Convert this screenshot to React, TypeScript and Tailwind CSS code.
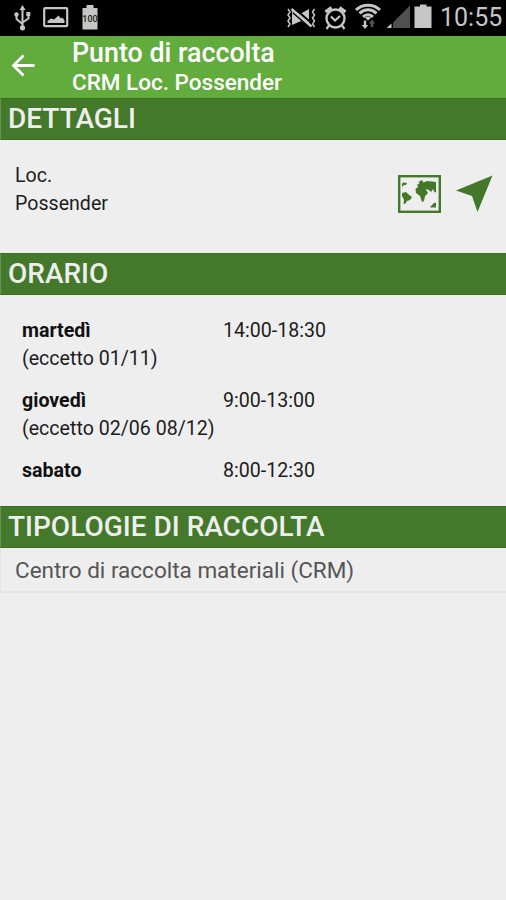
export default function App() {
  return (
    <div className="flex h-[900px] w-[506px] flex-col overflow-hidden bg-[#eeeeee] font-[Roboto,sans-serif] text-[#1d1d1d]">
      <StatusBar />
      <header className="flex h-[62px] shrink-0 bg-[#62ac3d] text-white">
        <div className="w-[72px] pt-[18px] pl-[11px]">
          <svg width="24" height="23" viewBox="0 0 24 23" fill="none" stroke="currentColor" strokeWidth="2.8">
            <path d="M23.5 11.5H3M12.5 1.5L2.5 11.5L12.5 21.5" />
          </svg>
        </div>
        <div className="pt-px font-medium whitespace-nowrap">
          <h1 className="text-[26.8px] leading-[32px]">Punto di raccolta</h1>
          <p className="text-[22.5px] leading-[27px]">CRM Loc. Possender</p>
        </div>
      </header>

      <SectionTitle>DETTAGLI</SectionTitle>
      <div className="flex h-[113px] shrink-0 justify-between pt-[21px] pr-[13px] pl-[15px]">
        <p className="pt-px text-[19.6px] leading-[28px]">
          Loc.
          <br />
          Possender
        </p>
        <div className="flex gap-[15px] pt-[14px] text-[#437829]">
          <MapIcon />
          <NavigateIcon />
        </div>
      </div>

      <SectionTitle>ORARIO</SectionTitle>
      <div className="flex h-[211px] shrink-0 flex-col gap-[14px] pt-[22px] pl-[22px]">
        <Hours day="martedì" time="14:00-18:30" note="(eccetto 01/11)" />
        <Hours day="giovedì" time="9:00-13:00" note="(eccetto 02/06 08/12)" />
        <Hours day="sabato" time="8:00-12:30" />
      </div>

      <SectionTitle>TIPOLOGIE DI RACCOLTA</SectionTitle>
      <div className="h-[45px] shrink-0 border-b-2 border-l border-[#e5e5e5] pl-[14px] text-[22.5px] leading-[45px] text-[#555555]">
        Centro di raccolta materiali (CRM)
      </div>
    </div>
  );
}

function SectionTitle({ children }: { children: React.ReactNode }) {
  return (
    <h2 className="h-[42px] shrink-0 border-y border-l border-y-[#3a7018] border-l-[#699252] bg-[#44782a] pl-[7px] text-[28px] leading-[40px] font-medium whitespace-nowrap text-[#eeeeee]">
      {children}
    </h2>
  );
}

function Hours({ day, time, note }: { day: string; time: string; note?: string }) {
  return (
    <div className="grid grid-cols-[201px_1fr] text-[19.6px] leading-[28px] whitespace-nowrap">
      <span className="font-bold text-[#111111]">{day}</span>
      <span>{time}</span>
      {note && <span>{note}</span>}
    </div>
  );
}

function StatusBar() {
  return (
    <div className="flex h-[36px] shrink-0 justify-between bg-black text-[#c6c6c6]">
      <svg width="110" height="36" viewBox="0 0 110 36" fill="none" stroke="currentColor">
        {/* usb */}
        <path d="M22.5 8V28M16.5 15V19L22.5 24M28.5 14V18.5L22.5 22.5" strokeWidth="2" />
        <path d="M22.5 5L25.5 10H19.5Z" fill="currentColor" stroke="none" />
        <circle cx="22.5" cy="27.8" r="2.6" fill="currentColor" stroke="none" />
        <circle cx="16.5" cy="14.5" r="2.2" fill="currentColor" stroke="none" />
        <path d="M26.3 12H30.3V16H26.3Z" fill="currentColor" stroke="none" />
        {/* picture */}
        <rect x="44.2" y="8.2" width="23" height="18" rx="1" strokeWidth="2.2" />
        <path d="M47.5 23V21L51 18.5L54 19.5L58.5 15.5L61 18.5L62.5 17.5L64.5 20.5V23Z" fill="currentColor" stroke="none" />
        {/* battery level */}
        <path d="M86.5 5H93.5V8H97.5V29.5H82.5V8H86.5Z" fill="currentColor" stroke="none" />
        <text x="90" y="21.5" textAnchor="middle" fontSize="9" fontWeight="500" fill="#222222" stroke="none">
          100
        </text>
      </svg>
      <div className="flex">
        <svg width="154" height="36" viewBox="0 0 154 36" fill="none" stroke="currentColor">
          {/* vibrate / muted */}
          <path d="M2 9L4 12L2 15L4 18L2 21L4 24L2 27M28.5 9L26.5 12L28.5 15L26.5 18L28.5 21L26.5 24L28.5 27" strokeWidth="1.5" />
          <path d="M6 11V25L15 21L23 26V9L14 14Z" fill="currentColor" stroke="none" />
          <path d="M7 12.5L25 28" stroke="#000000" strokeWidth="2" />
          <path d="M8 8L26 23.5" stroke="#000000" strokeWidth="2" />
          <path d="M5.5 9L25.5 26.5" strokeWidth="2.4" />
          {/* alarm */}
          <circle cx="49.5" cy="18.5" r="9" strokeWidth="2.4" />
          <path d="M45 16.5L49 20.5L54 16M43 25.5L40.5 29M56 25.5L58.5 29" strokeWidth="2.2" />
          <path d="M39.5 12L45.5 7.5M53.5 7.5L59.5 12" strokeWidth="3.4" />
          {/* wifi */}
          <path d="M70 10C76.5 3.5 87.5 3.5 94 10M73.5 13.5C78.5 8.5 85.5 8.5 90.5 13.5M77 16.8C80 14 84 14 87 16.8" strokeWidth="3" />
          <path d="M79 17.8C81 16.2 83 16.2 85 17.8L82 20.5Z" fill="currentColor" stroke="none" />
          <path d="M77.8 20.5H80.2V25H82.2L79 29L75.8 25H77.8Z" fill="currentColor" stroke="none" />
          <path d="M86 19.5L89.2 23.5H87.2V27H84.8V23.5H82.8Z" fill="#555555" stroke="none" />
          {/* signal */}
          <path d="M107 28V22.5L124 5.5V28Z" fill="#505050" stroke="none" />
          <path d="M100.5 28L105.5 23.5V28Z" fill="currentColor" stroke="none" />
          {/* battery */}
          <path d="M134 4.5H140.5V6.5H145.5V28H128.5V6.5H134Z" fill="currentColor" stroke="none" />
        </svg>
        <span className="w-[66px] text-[25px] leading-[35px] whitespace-nowrap">10:55</span>
      </div>
    </div>
  );
}

function MapIcon() {
  return (
    <svg width="43" height="38" viewBox="0 0 43 38" fill="currentColor">
      <rect x="1.2" y="1.2" width="40.6" height="35.6" fill="none" stroke="currentColor" strokeWidth="2.4" />
      <path d="M4 9L5 7.5L9 8L8 10L6 10L4 12ZM4 18L8 17L10 19L14 22L12 25L9 26L7 29L5.5 29L6 25L4 21Z" />
      <path d="M19 9.5L21.5 9L20.5 7L24 5L25.5 7.5L29 6L38 7V17L36.5 17.5L35 14L33 17L31 15L27.5 14L30 18L27 21L26 26L24 27L22 21L18 18L17.5 14L20 12Z" />
      <path d="M32 32L36 28L38 27.5V32.5H33Z" />
    </svg>
  );
}

function NavigateIcon() {
  return (
    <svg width="37" height="38" viewBox="0 0 37 38" fill="currentColor">
      <path d="M36.5 0.5L21.5 37L16 21L0 15.5Z" />
    </svg>
  );
}
